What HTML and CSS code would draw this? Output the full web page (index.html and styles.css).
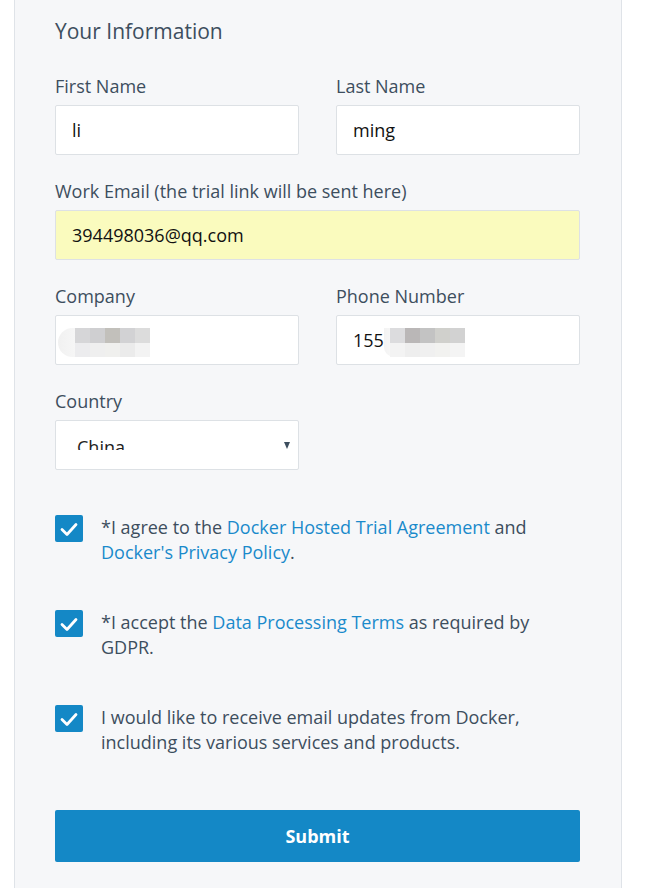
FILE: index.html
```html
<!DOCTYPE html>
<html lang="en">
<head>
<meta charset="utf-8">
<title>Your Information</title>
<link rel="stylesheet" href="styles.css">
</head>
<body>
<div class="panel">
  <h2 class="title">Your Information</h2>
  <div class="grid">
    <div class="field">
      <div class="label">First Name</div>
      <div class="input">li</div>
    </div>
    <div class="field">
      <div class="label">Last Name</div>
      <div class="input">ming</div>
    </div>
    <div class="field wide">
      <div class="label">Work Email (the trial link will be sent here)</div>
      <div class="input autofill">394498036@qq.com</div>
    </div>
    <div class="field">
      <div class="label">Company</div>
      <div class="input"><span class="blur company"><i class="px c1"></i><i class="px c2"></i><i class="px c3"></i><i class="px c4"></i><i class="px c5"></i><i class="px d1"></i><i class="px d2"></i><i class="px d3"></i><i class="px d4"></i><i class="px d5"></i></span></div>
    </div>
    <div class="field">
      <div class="label">Phone Number</div>
      <div class="input">155<span class="blur phone"><i class="px p1"></i><i class="px p2"></i><i class="px p3"></i><i class="px p4"></i><i class="px p5"></i><i class="px q1"></i><i class="px q2"></i><i class="px q3"></i><i class="px q4"></i><i class="px q5"></i></span></div>
    </div>
    <div class="field">
      <div class="label">Country</div>
      <div class="input select"><span class="sel-text">China</span><span class="arrow"></span></div>
    </div>
  </div>

  <div class="checks">
    <div class="check">
      <span class="box"><svg viewBox="0 0 28 28" width="28" height="28"><path d="M7 14.5 L12 19.5 L21 9.5" fill="none" stroke="#fff" stroke-width="2.8" stroke-linecap="round" stroke-linejoin="round"/></svg></span>
      <p class="ctext">*I agree to the <a href="#">Docker Hosted Trial Agreement</a> and <a href="#">Docker's Privacy Policy</a>.</p>
    </div>
    <div class="check">
      <span class="box"><svg viewBox="0 0 28 28" width="28" height="28"><path d="M7 14.5 L12 19.5 L21 9.5" fill="none" stroke="#fff" stroke-width="2.8" stroke-linecap="round" stroke-linejoin="round"/></svg></span>
      <p class="ctext">*I accept the <a href="#">Data Processing Terms</a> as required by GDPR.</p>
    </div>
    <div class="check">
      <span class="box"><svg viewBox="0 0 28 28" width="28" height="28"><path d="M7 14.5 L12 19.5 L21 9.5" fill="none" stroke="#fff" stroke-width="2.8" stroke-linecap="round" stroke-linejoin="round"/></svg></span>
      <p class="ctext">I would like to receive email updates from Docker, including its various services and products.</p>
    </div>
  </div>

  <button class="submit">Submit</button>
</div>
</body>
</html>
```

FILE: styles.css
```css
* { box-sizing: border-box; }
html, body { margin: 0; padding: 0; background: #fff; }
body {
  font-family: "Open Sans", "Noto Sans", sans-serif;
  color: #3d4e5e;
}
.panel {
  margin-left: 14px;
  width: 608px;
  min-height: 888px;
  background: #f6f7f9;
  border-left: 1px solid #dfe3e8;
  border-right: 1px solid #dfe3e8;
  padding: 17px 41px 0 40px;
}
.title {
  margin: 0;
  font-size: 21px;
  font-weight: 400;
  line-height: 28px;
  color: #3d4e5e;
}
.grid {
  margin-top: 29px;
  display: grid;
  grid-template-columns: 244px 244px;
  column-gap: 37px;
  row-gap: 24px;
}
.field.wide { grid-column: 1 / span 2; }
.label {
  font-size: 18px;
  line-height: 24px;
  height: 24px;
  margin-bottom: 7px;
  white-space: nowrap;
}
.input {
  height: 50px;
  background: #fff;
  border: 1px solid #dde1e5;
  border-radius: 2px;
  padding: 0 16px;
  font-size: 18px;
  line-height: 48px;
  color: #111;
  display: flex;
  align-items: center;
}
.input.autofill { background: #fafbbe; }

.blur {
  display: grid;
  grid-template-columns: repeat(5, 15px);
  grid-template-rows: 15px 14px;
  margin-top: 4px;
}
.blur .px { display: block; }
.company {
  margin-left: -14px;
  padding-left: 17px;
  background: linear-gradient(90deg, #f1f1f1 0, #f6f6f6 17px, transparent 17px);
  border-radius: 15px 0 0 15px;
}
.c1 { background: #d6d6d8; }
.c2 { background: #cfcfd1; }
.c3 { background: #c2c0bb; }
.c4 { background: #d2d2d4; }
.c5 { background: #dcdcdc; }
.d1 { background: #ececee; }
.d2 { background: #efefef; }
.d3 { background: #f0f0ee; }
.d4 { background: #ebebeb; }
.d5 { background: #f3f3f3; }
.phone {
  padding-left: 6px;
  background: linear-gradient(90deg, #f3f3f3 0, #f6f6f6 6px, transparent 6px);
  border-radius: 0 0 0 10px;
}
.p1 { background: #dcdcde; }
.p2 { background: #bab7b7; }
.p3 { background: #c3c3c3; }
.p4 { background: #d0d0cc; }
.p5 { background: #d2d2d2; }
.q1 { background: #f3f3f3; }
.q2 { background: #eeeeee; }
.q3 { background: #f0f0f0; }
.q4 { background: #f2f2f0; }
.q5 { background: #f4f4f4; }

.select { position: relative; padding-left: 21px; align-items: flex-start; }
.sel-text {
  display: block;
  margin-top: 17px;
  height: 12px;
  overflow: hidden;
  line-height: 19px;
  font-size: 18px;
  color: #222;
}
.arrow {
  position: absolute;
  right: 8px;
  top: 21px;
  width: 0;
  height: 0;
  border-left: 3.5px solid transparent;
  border-right: 3.5px solid transparent;
  border-top: 7px solid #3d4e5e;
}
.checks {
  margin-top: 45px;
  display: flex;
  flex-direction: column;
  gap: 45px;
}
.check {
  display: flex;
  align-items: flex-start;
  gap: 18px;
}
.box {
  flex: none;
  width: 28px;
  height: 27px;
  background: #1488c6;
  border-radius: 2px;
  display: flex;
  align-items: center;
  justify-content: center;
}
.box svg { display: block; }
.ctext {
  margin: 0;
  font-size: 18px;
  line-height: 25px;
  width: 460px;
  color: #3d4e5e;
}
.ctext a { color: #1a8acb; text-decoration: none; }
.submit {
  display: block;
  margin-top: 55px;
  width: 525px;
  height: 52px;
  border: 0;
  border-radius: 2px;
  background: #1488c6;
  color: #fff;
  font-family: "Open Sans", "Noto Sans", sans-serif;
  font-weight: 700;
  font-size: 18px;
}
```
